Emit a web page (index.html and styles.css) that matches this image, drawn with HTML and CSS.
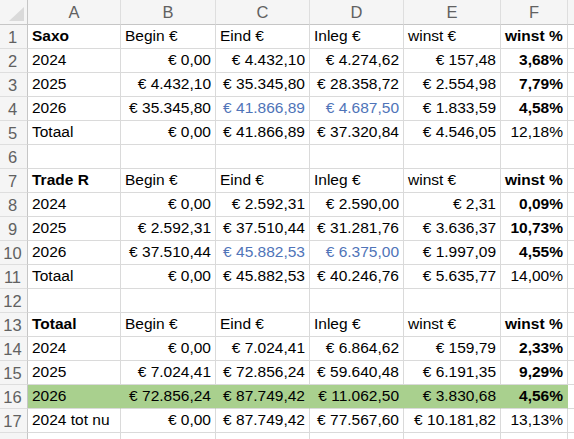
FILE: index.html
```html
<!DOCTYPE html>
<html>
<head>
<meta charset="utf-8">
<link rel="stylesheet" href="styles.css">
</head>
<body>
<div class="sheet">
  <div class="hd corner"><span class="tri"></span></div>
  <div class="hd col">A</div><div class="hd col">B</div><div class="hd col">C</div><div class="hd col">D</div><div class="hd col">E</div><div class="hd col">F</div><div class="hd col last"></div>

  <div class="hd rn">1</div>
  <div class="c b">Saxo</div><div class="c">Begin €</div><div class="c">Eind €</div><div class="c">Inleg €</div><div class="c">winst €</div><div class="c b">winst %</div><div class="c"></div>

  <div class="hd rn">2</div>
  <div class="c">2024</div><div class="c r">€ 0,00</div><div class="c r">€ 4.432,10</div><div class="c r">€ 4.274,62</div><div class="c r">€ 157,48</div><div class="c r b">3,68%</div><div class="c"></div>

  <div class="hd rn">3</div>
  <div class="c">2025</div><div class="c r">€ 4.432,10</div><div class="c r">€ 35.345,80</div><div class="c r">€ 28.358,72</div><div class="c r">€ 2.554,98</div><div class="c r b">7,79%</div><div class="c"></div>

  <div class="hd rn">4</div>
  <div class="c">2026</div><div class="c r">€ 35.345,80</div><div class="c r blue">€ 41.866,89</div><div class="c r blue">€ 4.687,50</div><div class="c r">€ 1.833,59</div><div class="c r b">4,58%</div><div class="c"></div>

  <div class="hd rn">5</div>
  <div class="c">Totaal</div><div class="c r">€ 0,00</div><div class="c r">€ 41.866,89</div><div class="c r">€ 37.320,84</div><div class="c r">€ 4.546,05</div><div class="c r">12,18%</div><div class="c"></div>

  <div class="hd rn">6</div>
  <div class="c"></div><div class="c"></div><div class="c"></div><div class="c"></div><div class="c"></div><div class="c"></div><div class="c"></div>

  <div class="hd rn">7</div>
  <div class="c b">Trade R</div><div class="c">Begin €</div><div class="c">Eind €</div><div class="c">Inleg €</div><div class="c">winst €</div><div class="c b">winst %</div><div class="c"></div>

  <div class="hd rn">8</div>
  <div class="c">2024</div><div class="c r">€ 0,00</div><div class="c r">€ 2.592,31</div><div class="c r">€ 2.590,00</div><div class="c r">€ 2,31</div><div class="c r b">0,09%</div><div class="c"></div>

  <div class="hd rn">9</div>
  <div class="c">2025</div><div class="c r">€ 2.592,31</div><div class="c r">€ 37.510,44</div><div class="c r">€ 31.281,76</div><div class="c r">€ 3.636,37</div><div class="c r b">10,73%</div><div class="c"></div>

  <div class="hd rn">10</div>
  <div class="c">2026</div><div class="c r">€ 37.510,44</div><div class="c r blue">€ 45.882,53</div><div class="c r blue">€ 6.375,00</div><div class="c r">€ 1.997,09</div><div class="c r b">4,55%</div><div class="c"></div>

  <div class="hd rn">11</div>
  <div class="c">Totaal</div><div class="c r">€ 0,00</div><div class="c r">€ 45.882,53</div><div class="c r">€ 40.246,76</div><div class="c r">€ 5.635,77</div><div class="c r">14,00%</div><div class="c"></div>

  <div class="hd rn">12</div>
  <div class="c"></div><div class="c"></div><div class="c"></div><div class="c"></div><div class="c"></div><div class="c"></div><div class="c"></div>

  <div class="hd rn">13</div>
  <div class="c b">Totaal</div><div class="c">Begin €</div><div class="c">Eind €</div><div class="c">Inleg €</div><div class="c">winst €</div><div class="c b">winst %</div><div class="c"></div>

  <div class="hd rn">14</div>
  <div class="c">2024</div><div class="c r">€ 0,00</div><div class="c r">€ 7.024,41</div><div class="c r">€ 6.864,62</div><div class="c r">€ 159,79</div><div class="c r b">2,33%</div><div class="c"></div>

  <div class="hd rn">15</div>
  <div class="c">2025</div><div class="c r">€ 7.024,41</div><div class="c r">€ 72.856,24</div><div class="c r">€ 59.640,48</div><div class="c r">€ 6.191,35</div><div class="c r b">9,29%</div><div class="c"></div>

  <div class="hd rn">16</div>
  <div class="c hl">2026</div><div class="c r hl">€ 72.856,24</div><div class="c r hl">€ 87.749,42</div><div class="c r hl">€ 11.062,50</div><div class="c r hl">€ 3.830,68</div><div class="c r b hl">4,56%</div><div class="c"></div>

  <div class="hd rn">17</div>
  <div class="c">2024 tot nu</div><div class="c r">€ 0,00</div><div class="c r">€ 87.749,42</div><div class="c r">€ 77.567,60</div><div class="c r">€ 10.181,82</div><div class="c r">13,13%</div><div class="c"></div>

  <div class="hd rn"></div>
  <div class="c"></div><div class="c"></div><div class="c"></div><div class="c"></div><div class="c"></div><div class="c"></div><div class="c"></div>
</div>
</body>
</html>
```

FILE: styles.css
```css
html, body {
  margin: 0;
  padding: 0;
  background: #ffffff;
}

body {
  font-family: "Liberation Sans", Arial, sans-serif;
  font-size: 15.5px;
  color: #000000;
  overflow: hidden;
}

.sheet {
  display: grid;
  grid-template-columns: 28px 93px 95px 94px 94px 97px 67px 1fr;
  grid-template-rows: 25px repeat(18, 24px);
  width: 574px;
}

.sheet > div {
  box-sizing: border-box;
  border-right: 1px solid #dadada;
  border-bottom: 1px solid #dadada;
  white-space: nowrap;
  overflow: hidden;
}

.hd {
  background: #f5f5f5;
  color: #616161;
  font-size: 16.5px;
  display: flex;
  align-items: center;
  justify-content: center;
}

.sheet > .col {
  border-bottom-color: #c6c6c6;
  border-right-color: #dedede;
  padding-top: 1px;
}

.sheet > .rn {
  border-right-color: #c6c6c6;
  border-bottom-color: #dedede;
  padding-top: 1px;
  padding-right: 2px;
}

.sheet > .corner {
  border-bottom-color: #c6c6c6;
  border-right-color: #c6c6c6;
  position: relative;
}

.tri {
  position: absolute;
  right: 3px;
  bottom: 3px;
  width: 0;
  height: 0;
  border-left: 15px solid transparent;
  border-bottom: 14px solid #dadada;
}

.c {
  display: flex;
  align-items: flex-end;
  padding: 0 4px 3px 4px;
  line-height: 18px;
}

.r {
  justify-content: flex-end;
}

.b {
  font-weight: bold;
}

.blue {
  color: #4f74b8;
}

.sheet > .hl {
  background: #a9d08e;
  border-right-color: #a9d08e;
}
```
